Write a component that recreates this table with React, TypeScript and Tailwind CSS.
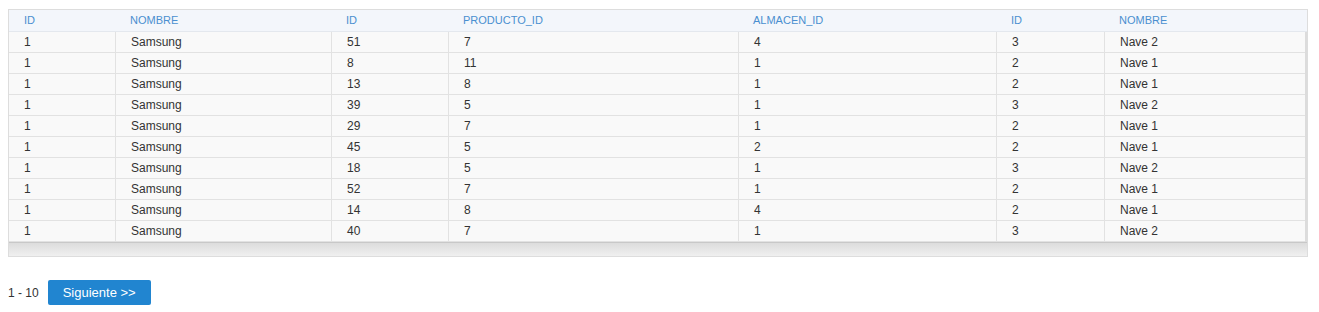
import React from "react";

const headers = ["ID", "NOMBRE", "ID", "PRODUCTO_ID", "ALMACEN_ID", "ID", "NOMBRE"];

const rows = [
  ["1", "Samsung", "51", "7", "4", "3", "Nave 2"],
  ["1", "Samsung", "8", "11", "1", "2", "Nave 1"],
  ["1", "Samsung", "13", "8", "1", "2", "Nave 1"],
  ["1", "Samsung", "39", "5", "1", "3", "Nave 2"],
  ["1", "Samsung", "29", "7", "1", "2", "Nave 1"],
  ["1", "Samsung", "45", "5", "2", "2", "Nave 1"],
  ["1", "Samsung", "18", "5", "1", "3", "Nave 2"],
  ["1", "Samsung", "52", "7", "1", "2", "Nave 1"],
  ["1", "Samsung", "14", "8", "4", "2", "Nave 1"],
  ["1", "Samsung", "40", "7", "1", "3", "Nave 2"],
];

const cols = "grid grid-cols-[106px_216px_117px_290px_258px_108px_1fr]";

export default function App() {
  return (
    <div className="bg-white min-h-[312px] font-['Liberation_Sans',Arial,sans-serif] text-[#333]">
      <div className="pt-[9px] px-[8px]">
        <div className="w-[1300px] border border-[#dddddd] bg-[#f9f9f9]">
          {/* Header */}
          <div className={`${cols} h-[22px] bg-[#f3f6fb] border-b border-[#e4e8ee]`}>
            {headers.map((h, i) => (
              <div key={i} className="pl-[15px] flex items-center text-[11px] text-[#4a8fd0]">
                {h}
              </div>
            ))}
          </div>

          {/* Body */}
          <div className="border-r-2 border-[#dcdcdc]">
            {rows.map((r, ri) => (
              <div key={ri} className={`${cols} h-[21px] border-b border-[#e2e2e2]`}>
                {r.map((c, ci) => (
                  <div
                    key={ci}
                    className={`flex items-center pl-[15px] text-[12px] ${ci > 0 ? "border-l border-[#e2e2e2]" : ""}`}
                  >
                    {c}
                  </div>
                ))}
              </div>
            ))}
          </div>

          {/* Scroll area */}
          <div className="h-[14px] border-t border-[#c8c8c8] bg-gradient-to-b from-[#dcdcdc] to-[#f0f0f0]" />
        </div>
      </div>

      <div className="flex items-center gap-[9px] px-[8px] mt-[23px]">
        <span className="text-[12px] text-[#333]">1 - 10</span>
        <button className="h-[25px] px-[15px] bg-[#2185d0] rounded-[2px] text-white text-[13px]">
          Siguiente &gt;&gt;
        </button>
      </div>
    </div>
  );
}
